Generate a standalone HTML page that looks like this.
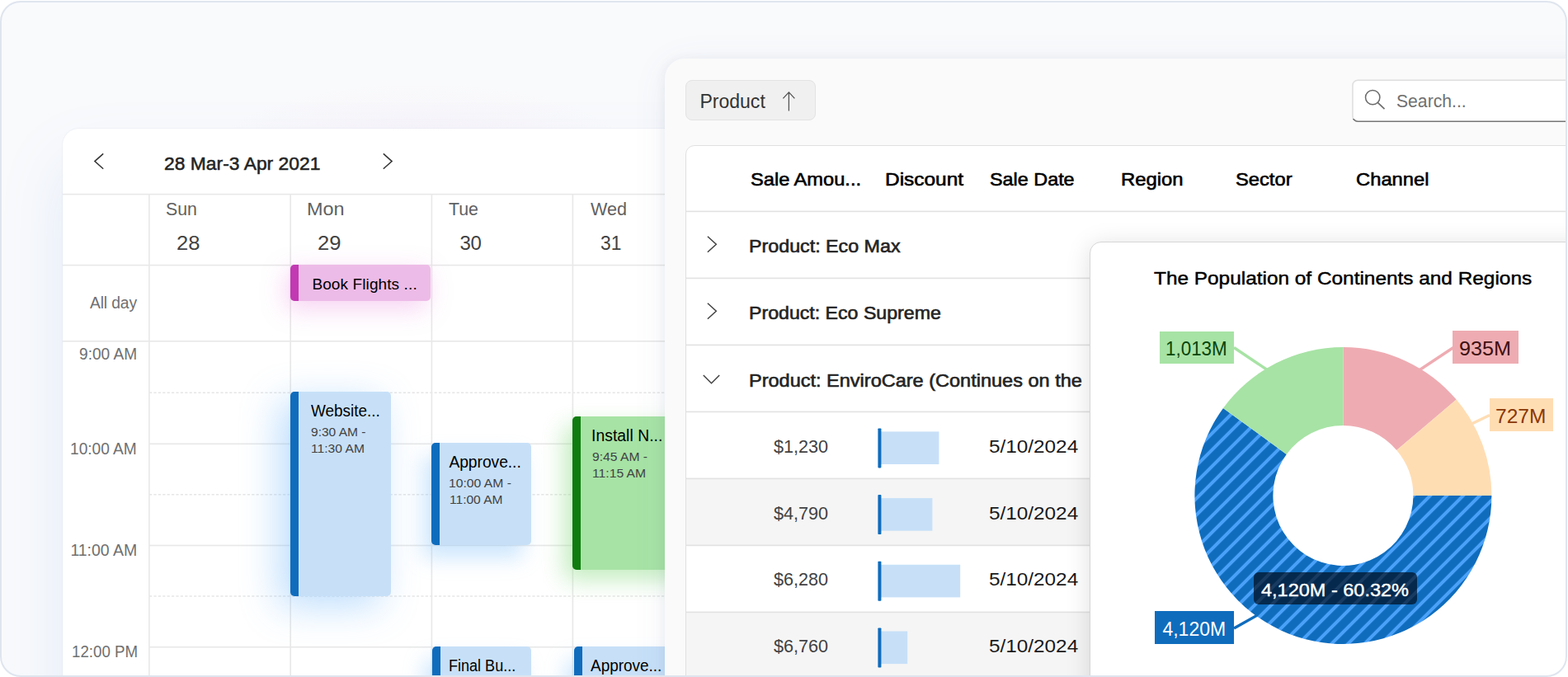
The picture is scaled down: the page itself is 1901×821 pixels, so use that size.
<!DOCTYPE html>
<html lang="en"><head><meta charset="utf-8"><title>Dashboard</title>
<style>
*{box-sizing:border-box;margin:0;padding:0}
html,body{width:1901px;height:821px;background:#fff;overflow:hidden}
body{font-family:"Liberation Sans", sans-serif;position:relative}
.t{position:absolute;white-space:nowrap;font-family:"Liberation Sans", sans-serif;transform-origin:0 0}
#frame{position:absolute;left:0;top:1px;width:1900px;height:820px;border-radius:25px;background:#f9fafc;overflow:hidden}
#frameborder{position:absolute;left:0;top:1px;width:1900px;height:820px;border-radius:25px;border:2px solid #dfe5ee;pointer-events:none}
#cal{position:absolute;left:76px;top:156px;width:820px;height:720px;background:#fff;border-radius:20px 0 0 0;box-shadow:0 40px 80px rgba(70,125,225,.125),0 0 0 1px rgba(90,100,150,.045)}
#calglow{position:absolute;left:250px;top:100px;width:520px;height:120px;background:radial-gradient(ellipse at 50% 75%,rgba(225,160,220,.10),rgba(225,160,220,0) 70%)}
#calclip{position:absolute;left:0;top:0;width:100%;height:100%;overflow:hidden;border-radius:20px 0 0 0}
.ev{position:absolute;border-radius:5px;overflow:visible}
.ev i{position:absolute;left:0;top:0;bottom:0;width:9.6px;border-radius:5px 0 0 5px}
.ev.berry{background:#edbbe7;box-shadow:-5px 9px 30px rgba(235,135,222,.38)}
.ev.berry i{background:#c239b3}
.ev.blue{background:#c7e0f8;box-shadow:-10px 16px 24px rgba(120,188,250,.36)}
.ev.blue.strong{box-shadow:-14px 12px 46px rgba(110,182,250,.45)}
.ev.blue i{background:#0f6cbd}
.ev.green{background:#a7e3a5;box-shadow:-10px 12px 28px rgba(125,215,115,.46)}
.ev.green i{background:#107c10}
.chev{position:absolute;overflow:visible}
#grid{position:absolute;left:806px;top:71px;width:1200px;height:800px;background:#fafafa;border-radius:24px 0 0 0;box-shadow:0 6px 44px rgba(85,100,150,.075),-2px 0 12px rgba(60,80,120,.06)}
#pbtn{position:absolute;left:25.00px;top:26.00px;width:158.40px;height:49.00px;background:#f0f0f0;border:1px solid #e3e3e3;border-radius:8px}
#tbl{position:absolute;left:25px;top:105px;width:1200px;height:800px;background:#fff;border:1px solid #e0e0e0;border-radius:11px 0 0 0;overflow:hidden}
#tblin{position:absolute;left:-1px;top:-1px;width:1200px;height:800px}
.alt{position:absolute;background:#f5f5f5}
#chart{position:absolute;left:1321px;top:293px;width:700px;height:700px;background:#fff;border:1px solid #d6d6d6;border-radius:14px 0 0 0;box-shadow:0 4px 30px rgba(0,0,0,.13)}
#chartin{position:absolute;left:-1px;top:-1px;width:700px;height:700px}
.lab{position:absolute}
.lg{background:#a7e3a5} .lr{background:#eeacb2} .lo{background:#ffddb3} .lb{background:#0f6cbd}
.tip{background:rgba(0,9,22,.67);border-radius:6px}
</style></head>
<body>
<div id="frame">
<div style="position:absolute;left:0;top:-1px;width:1901px;height:821px">
 <div id="calglow"></div>
 <section id="cal">
  <div id="calclip">
  <svg style="position:absolute;left:0;top:0" width="820" height="720"><rect x="0.0" y="78.80" width="824.0" height="1.6" fill="#e8e8e8"/>
<rect x="0.0" y="164.80" width="824.0" height="1.6" fill="#e8e8e8"/>
<rect x="0.0" y="257.00" width="824.0" height="1.6" fill="#e8e8e8"/>
<rect x="105.0" y="381.50" width="719.0" height="1.6" fill="#e8e8e8"/>
<rect x="105.0" y="504.70" width="719.0" height="1.6" fill="#e8e8e8"/>
<rect x="105.0" y="627.90" width="719.0" height="1.6" fill="#e8e8e8"/>
<line x1="105.0" x2="824.0" y1="320.20" y2="320.20" stroke="#e6e6e6" stroke-width="1.5" stroke-dasharray="3.2 2.2"/>
<line x1="105.0" x2="824.0" y1="443.80" y2="443.80" stroke="#e6e6e6" stroke-width="1.5" stroke-dasharray="3.2 2.2"/>
<line x1="105.0" x2="824.0" y1="567.00" y2="567.00" stroke="#e6e6e6" stroke-width="1.5" stroke-dasharray="3.2 2.2"/>
<rect x="104.10" y="79.6" width="1.6" height="700" fill="#e8e8e8"/>
<rect x="275.40" y="79.6" width="1.6" height="700" fill="#e8e8e8"/>
<rect x="446.60" y="79.6" width="1.6" height="700" fill="#e8e8e8"/>
<rect x="617.60" y="79.6" width="1.6" height="700" fill="#e8e8e8"/></svg>
  </div>
  <div class="ev berry" style="left:276.00px;top:165.00px;width:170.00px;height:44.00px;"><i></i></div>
<div class="ev blue strong" style="left:276.00px;top:319.00px;width:122.00px;height:248.00px;"><i></i></div>
<div class="ev blue" style="left:447.00px;top:381.00px;width:121.00px;height:124.00px;"><i></i></div>
<div class="ev green" style="left:618.00px;top:349.00px;width:166.00px;height:186.00px;"><i></i></div>
<div class="ev blue" style="left:448.00px;top:628.00px;width:120.00px;height:116.00px;"><i></i></div>
<div class="ev blue" style="left:620.00px;top:628.00px;width:164.00px;height:116.00px;"><i></i></div>
  <svg class="chev" style="left:38px;top:30px" width="12" height="20" viewBox="0 0 12 20"><path d="M11.2 0.4 L0.9 9.6 L11.2 18.8" fill="none" stroke="#333" stroke-width="1.5"/></svg>
  <svg class="chev" style="left:387.6px;top:30px" width="12" height="20" viewBox="0 0 12 20"><path d="M0.8 0.4 L11.1 9.6 L0.8 18.8" fill="none" stroke="#333" stroke-width="1.5"/></svg>
  <span class="t " style="left:123.00px;top:27.60px;font-size:22.8px;line-height:28px;letter-spacing:0.038px;color:#242424;-webkit-text-stroke:0.55px #242424;">28 Mar-3 Apr 2021</span>
<span class="t " style="left:125.06px;top:83.50px;font-size:22.6px;line-height:28px;letter-spacing:0.000px;color:#616161;transform:scaleX(0.9421);">Sun</span>
<span class="t " style="left:296.46px;top:83.50px;font-size:22.6px;line-height:28px;letter-spacing:0.000px;color:#616161;transform:scaleX(1.0381);">Mon</span>
<span class="t " style="left:468.00px;top:83.50px;font-size:22.6px;line-height:28px;letter-spacing:0.000px;color:#616161;transform:scaleX(0.9433);">Tue</span>
<span class="t " style="left:639.60px;top:83.50px;font-size:22.6px;line-height:28px;letter-spacing:0.000px;color:#616161;transform:scaleX(0.9542);">Wed</span>
<span class="t " style="left:137.93px;top:124.40px;font-size:24px;line-height:29px;letter-spacing:0.000px;color:#424242;transform:scaleX(1.0652);">28</span>
<span class="t " style="left:308.93px;top:124.40px;font-size:24px;line-height:29px;letter-spacing:0.000px;color:#424242;transform:scaleX(1.0652);">29</span>
<span class="t " style="left:481.40px;top:124.40px;font-size:24px;line-height:29px;letter-spacing:-0.148px;color:#424242;">30</span>
<span class="t " style="left:652.00px;top:124.40px;font-size:24px;line-height:29px;letter-spacing:0.000px;color:#424242;transform:scaleX(0.9489);">31</span>
<span class="t " style="left:33.00px;top:199.50px;font-size:19.3px;line-height:24px;letter-spacing:-0.139px;color:#707070;">All day</span>
<span class="t " style="left:20.00px;top:261.00px;font-size:19.5px;line-height:24px;letter-spacing:0.000px;color:#707070;transform:scaleX(0.9807);">9:00 AM</span>
<span class="t " style="left:9.42px;top:375.60px;font-size:19.5px;line-height:24px;letter-spacing:0.000px;color:#707070;transform:scaleX(0.9800);">10:00 AM</span>
<span class="t " style="left:9.40px;top:499.00px;font-size:19.5px;line-height:24px;letter-spacing:-0.025px;color:#707070;">11:00 AM</span>
<span class="t " style="left:11.04px;top:622.00px;font-size:19.5px;line-height:24px;letter-spacing:0.000px;color:#707070;transform:scaleX(0.9603);">12:00 PM</span>
<span class="t " style="left:302.40px;top:177.00px;font-size:19px;line-height:23px;letter-spacing:0.108px;color:#000;">Book Flights ...</span>
<span class="t " style="left:301.00px;top:331.10px;font-size:19.3px;line-height:24px;letter-spacing:0.000px;color:#000;transform:scaleX(0.9808);">Website...</span>
<span class="t " style="left:301.00px;top:359.00px;font-size:14.8px;line-height:18px;letter-spacing:0.000px;color:#424242;transform:scaleX(1.0496);">9:30 AM -</span>
<span class="t " style="left:300.94px;top:379.00px;font-size:14.8px;line-height:18px;letter-spacing:0.000px;color:#424242;transform:scaleX(1.0573);">11:30 AM</span>
<span class="t " style="left:468.40px;top:393.10px;font-size:19.3px;line-height:24px;letter-spacing:-0.059px;color:#000;">Approve...</span>
<span class="t " style="left:467.54px;top:421.00px;font-size:14.8px;line-height:18px;letter-spacing:0.000px;color:#424242;transform:scaleX(1.0609);">10:00 AM -</span>
<span class="t " style="left:468.55px;top:441.00px;font-size:14.8px;line-height:18px;letter-spacing:0.000px;color:#424242;transform:scaleX(1.0507);">11:00 AM</span>
<span class="t " style="left:641.00px;top:361.10px;font-size:19.3px;line-height:24px;letter-spacing:0.058px;color:#000;">Install N...</span>
<span class="t " style="left:642.00px;top:389.00px;font-size:14.8px;line-height:18px;letter-spacing:0.000px;color:#424242;transform:scaleX(1.0589);">9:45 AM -</span>
<span class="t " style="left:641.94px;top:409.00px;font-size:14.8px;line-height:18px;letter-spacing:0.000px;color:#424242;transform:scaleX(1.0606);">11:15 AM</span>
<span class="t " style="left:468.06px;top:639.50px;font-size:19.3px;line-height:24px;letter-spacing:0.000px;color:#000;transform:scaleX(0.9355);">Final Bu...</span>
<span class="t " style="left:640.00px;top:639.50px;font-size:19.3px;line-height:24px;letter-spacing:0.000px;color:#000;transform:scaleX(0.9823);">Approve...</span>
 </section>
 <section id="grid">
  <div id="pbtn"></div>
  <svg class="chev" style="left:143px;top:40px" width="16" height="24" viewBox="0 0 16 24"><path d="M7.4 23.5 V0.9 M0.4 8.4 L7.4 0.9 L14.4 8.4" fill="none" stroke="#505050" stroke-width="1.25"/></svg>
  <svg id="search" class="chev" style="left:824px;top:19px" width="300" height="70" viewBox="0 0 300 70">
   <defs><clipPath id="sclip"><rect x="9.2" y="6.4" width="320" height="51.6" rx="7"/></clipPath></defs>
   <rect x="9.2" y="6.4" width="320" height="51.6" rx="7" fill="#dedede"/>
   <rect x="9.2" y="54" width="320" height="4" fill="#757575" clip-path="url(#sclip)"/>
   <rect x="10.7" y="7.9" width="320" height="48.5" rx="5.6" fill="#fff"/>
  </svg>
  <svg class="chev" style="left:847px;top:37px" width="28" height="26" viewBox="0 0 28 26"><circle cx="11.2" cy="10.1" r="8.7" fill="none" stroke="#6a6a6a" stroke-width="1.5"/><path d="M17.3 16.3 L25.5 24.1" stroke="#6a6a6a" stroke-width="1.6" fill="none"/></svg>
  <span class="t " style="left:42.40px;top:38.00px;font-size:23px;line-height:28px;letter-spacing:0.021px;color:#333;">Product</span>
<span class="t " style="left:887.04px;top:38.40px;font-size:22px;line-height:27px;letter-spacing:0.000px;color:#707070;transform:scaleX(0.9612);">Search...</span>
  <div id="tbl"><div id="tblin">
   <div class="alt" style="left:1.00px;top:405.00px;width:1118.00px;height:80.00px;"></div>
<div class="alt" style="left:1.00px;top:567.00px;width:1118.00px;height:87.00px;"></div>
<svg style="position:absolute;left:0;top:0" width="1200" height="700"><rect x="1" y="79.60" width="1200" height="1.6" fill="#e2e2e2"/><rect x="1" y="160.60" width="1200" height="1.6" fill="#e2e2e2"/><rect x="1" y="241.60" width="1200" height="1.6" fill="#e2e2e2"/><rect x="1" y="322.60" width="1200" height="1.6" fill="#e2e2e2"/><rect x="1" y="403.60" width="1200" height="1.6" fill="#e2e2e2"/><rect x="1" y="484.60" width="1200" height="1.6" fill="#e2e2e2"/><rect x="1" y="565.60" width="1200" height="1.6" fill="#e2e2e2"/></svg>
<svg style="position:absolute;left:0;top:0" width="400" height="700"><rect x="237.0" y="347.40" width="70.4" height="39.6" fill="#c7e0f8"/><rect x="233.4" y="343.40" width="4" height="48" rx="0.8" fill="#0f6cbd"/><rect x="237.0" y="428.10" width="62.4" height="39.6" fill="#c7e0f8"/><rect x="233.4" y="424.10" width="4" height="48" rx="0.8" fill="#0f6cbd"/><rect x="237.0" y="508.80" width="96.2" height="39.6" fill="#c7e0f8"/><rect x="233.4" y="504.80" width="4" height="48" rx="0.8" fill="#0f6cbd"/><rect x="237.0" y="589.50" width="32.2" height="39.6" fill="#c7e0f8"/><rect x="233.4" y="585.50" width="4" height="48" rx="0.8" fill="#0f6cbd"/></svg>
   <svg class="chev" style="left:26px;top:110px" width="13" height="21" viewBox="0 0 13 21"><path d="M0.9 0.8 L11.3 10.3 L0.9 19.8" fill="none" stroke="#424242" stroke-width="1.5"/></svg>
   <svg class="chev" style="left:26px;top:191px" width="13" height="21" viewBox="0 0 13 21"><path d="M0.9 0.8 L11.3 10.3 L0.9 19.8" fill="none" stroke="#424242" stroke-width="1.5"/></svg>
   <svg class="chev" style="left:20.5px;top:277.6px" width="22" height="13" viewBox="0 0 22 13"><path d="M0.8 0.9 L10.5 10.8 L20.2 0.9" fill="none" stroke="#424242" stroke-width="1.5"/></svg>
   <span class="t " style="left:78.95px;top:28.10px;font-size:22.6px;line-height:28px;letter-spacing:0.000px;color:#000;transform:scaleX(1.0466);-webkit-text-stroke:0.6px #000;">Sale Amou...</span>
<span class="t " style="left:241.52px;top:28.10px;font-size:22.6px;line-height:28px;letter-spacing:0.000px;color:#000;transform:scaleX(1.0819);-webkit-text-stroke:0.6px #000;">Discount</span>
<span class="t " style="left:368.97px;top:28.10px;font-size:22.6px;line-height:28px;letter-spacing:0.000px;color:#000;transform:scaleX(1.0342);-webkit-text-stroke:0.6px #000;">Sale Date</span>
<span class="t " style="left:527.54px;top:28.10px;font-size:22.6px;line-height:28px;letter-spacing:0.000px;color:#000;transform:scaleX(1.0566);-webkit-text-stroke:0.6px #000;">Region</span>
<span class="t " style="left:666.95px;top:28.10px;font-size:22.6px;line-height:28px;letter-spacing:0.000px;color:#000;transform:scaleX(1.0498);-webkit-text-stroke:0.6px #000;">Sector</span>
<span class="t " style="left:812.95px;top:28.10px;font-size:22.6px;line-height:28px;letter-spacing:0.000px;color:#000;transform:scaleX(1.0518);-webkit-text-stroke:0.6px #000;">Channel</span>
<span class="t " style="left:77.44px;top:109.40px;font-size:22px;line-height:27px;letter-spacing:0.000px;color:#242424;transform:scaleX(1.0572);-webkit-text-stroke:0.62px #242424;">Product: Eco Max</span>
<span class="t " style="left:77.45px;top:190.40px;font-size:22px;line-height:27px;letter-spacing:0.000px;color:#242424;transform:scaleX(1.0518);-webkit-text-stroke:0.62px #242424;">Product: Eco Supreme</span>
<span class="t " style="left:77.43px;top:271.50px;font-size:22px;line-height:27px;letter-spacing:0.000px;color:#242424;transform:scaleX(1.0687);-webkit-text-stroke:0.62px #242424;">Product: EnviroCare (Continues on the&nbsp; next page)</span>
<span class="t " style="left:107.00px;top:352.00px;font-size:22.5px;line-height:27px;letter-spacing:0.000px;color:#424242;transform:scaleX(0.9604);">$1,230</span>
<span class="t " style="left:368.40px;top:352.00px;font-size:22.5px;line-height:27px;letter-spacing:0.000px;color:#1a1a1a;transform:scaleX(1.0805);">5/10/2024</span>
<span class="t " style="left:107.00px;top:432.70px;font-size:22.5px;line-height:27px;letter-spacing:0.000px;color:#424242;transform:scaleX(0.9604);">$4,790</span>
<span class="t " style="left:368.40px;top:432.70px;font-size:22.5px;line-height:27px;letter-spacing:0.000px;color:#1a1a1a;transform:scaleX(1.0805);">5/10/2024</span>
<span class="t " style="left:107.00px;top:513.40px;font-size:22.5px;line-height:27px;letter-spacing:0.000px;color:#424242;transform:scaleX(0.9604);">$6,280</span>
<span class="t " style="left:368.40px;top:513.40px;font-size:22.5px;line-height:27px;letter-spacing:0.000px;color:#1a1a1a;transform:scaleX(1.0805);">5/10/2024</span>
<span class="t " style="left:107.00px;top:594.10px;font-size:22.5px;line-height:27px;letter-spacing:0.000px;color:#424242;transform:scaleX(0.9604);">$6,760</span>
<span class="t " style="left:368.40px;top:594.10px;font-size:22.5px;line-height:27px;letter-spacing:0.000px;color:#1a1a1a;transform:scaleX(1.0805);">5/10/2024</span>
  </div></div>
 </section>
 <section id="chart"><div id="chartin">
  <svg style="position:absolute;left:0;top:0" width="700" height="700" viewBox="0 0 700 700">
   <defs><pattern id="hatch" patternUnits="userSpaceOnUse" width="14.142" height="14.142" patternTransform="translate(413.00 308.00) rotate(-45)">
     <rect width="14.142" height="14.142" fill="#0f6cbd"/><rect x="0" y="-2" width="14.142" height="4" fill="#4aa1f8"/><rect x="0" y="12.142" width="14.142" height="4" fill="#4aa1f8"/></pattern></defs>
   <line x1="175.0" y1="128.5" x2="219.0" y2="158.0" stroke="#a7e3a5" stroke-width="3.4"/>
<line x1="441.0" y1="128.5" x2="395.0" y2="159.0" stroke="#eeacb2" stroke-width="3.4"/>
<line x1="485.0" y1="210.5" x2="459.0" y2="223.0" stroke="#ffddb3" stroke-width="3.4"/>
<line x1="175.0" y1="469.0" x2="207.0" y2="451.0" stroke="#0f6cbd" stroke-width="3.4"/>
   <path d="M307.40 128.00A180 180 0 0 1 444.68 191.58L372.23 253.02A85 85 0 0 0 307.40 223.00Z" fill="#eeacb2"/>
<path d="M444.68 191.58A180 180 0 0 1 487.40 308.00L392.40 308.00A85 85 0 0 0 372.23 253.02Z" fill="#ffddb3"/>
<path d="M487.40 308.00A180 180 0 1 1 161.96 201.94L238.72 257.92A85 85 0 1 0 392.40 308.00Z" fill="url(#hatch)"/>
<path d="M161.96 201.94A180 180 0 0 1 307.40 128.00L307.40 223.00A85 85 0 0 0 238.72 257.92Z" fill="#a7e3a5"/>
  </svg>
  <div class="lab lg" style="left:85.40px;top:108.50px;width:90.00px;height:39.70px;"></div>
<div class="lab lr" style="left:440.40px;top:108.00px;width:80.00px;height:40.00px;"></div>
<div class="lab lo" style="left:484.50px;top:190.40px;width:77.90px;height:39.40px;"></div>
<div class="lab lb" style="left:79.40px;top:448.40px;width:96.00px;height:39.60px;"></div>
<div class="lab tip" style="left:199.40px;top:400.60px;width:198.00px;height:39.40px;"></div>
  <span class="t " style="left:78.00px;top:31.00px;font-size:22.3px;line-height:27px;letter-spacing:0.000px;color:#000;transform:scaleX(1.0935);-webkit-text-stroke:0.45px #000;">The Population of Continents and Regions</span>
<span class="t " style="left:92.43px;top:116.00px;font-size:23px;line-height:28px;letter-spacing:0.000px;color:#094509;transform:scaleX(0.9738);">1,013M</span>
<span class="t " style="left:447.91px;top:116.00px;font-size:23px;line-height:28px;letter-spacing:0.000px;color:#3f1011;transform:scaleX(1.0944);">935M</span>
<span class="t " style="left:491.93px;top:198.30px;font-size:23px;line-height:28px;letter-spacing:0.000px;color:#8a3707;transform:scaleX(1.0655);">727M</span>
<span class="t " style="left:88.40px;top:456.00px;font-size:23px;line-height:28px;letter-spacing:0.009px;color:#fff;">4,120M</span>
<span class="t " style="left:208.00px;top:409.00px;font-size:22.5px;line-height:27px;letter-spacing:0.000px;color:#fff;transform:scaleX(1.0447);-webkit-text-stroke:0.4px #fff;">4,120M - 60.32%</span>
 </div></section>
</div>
</div>
<div id="frameborder"></div>
</body></html>
